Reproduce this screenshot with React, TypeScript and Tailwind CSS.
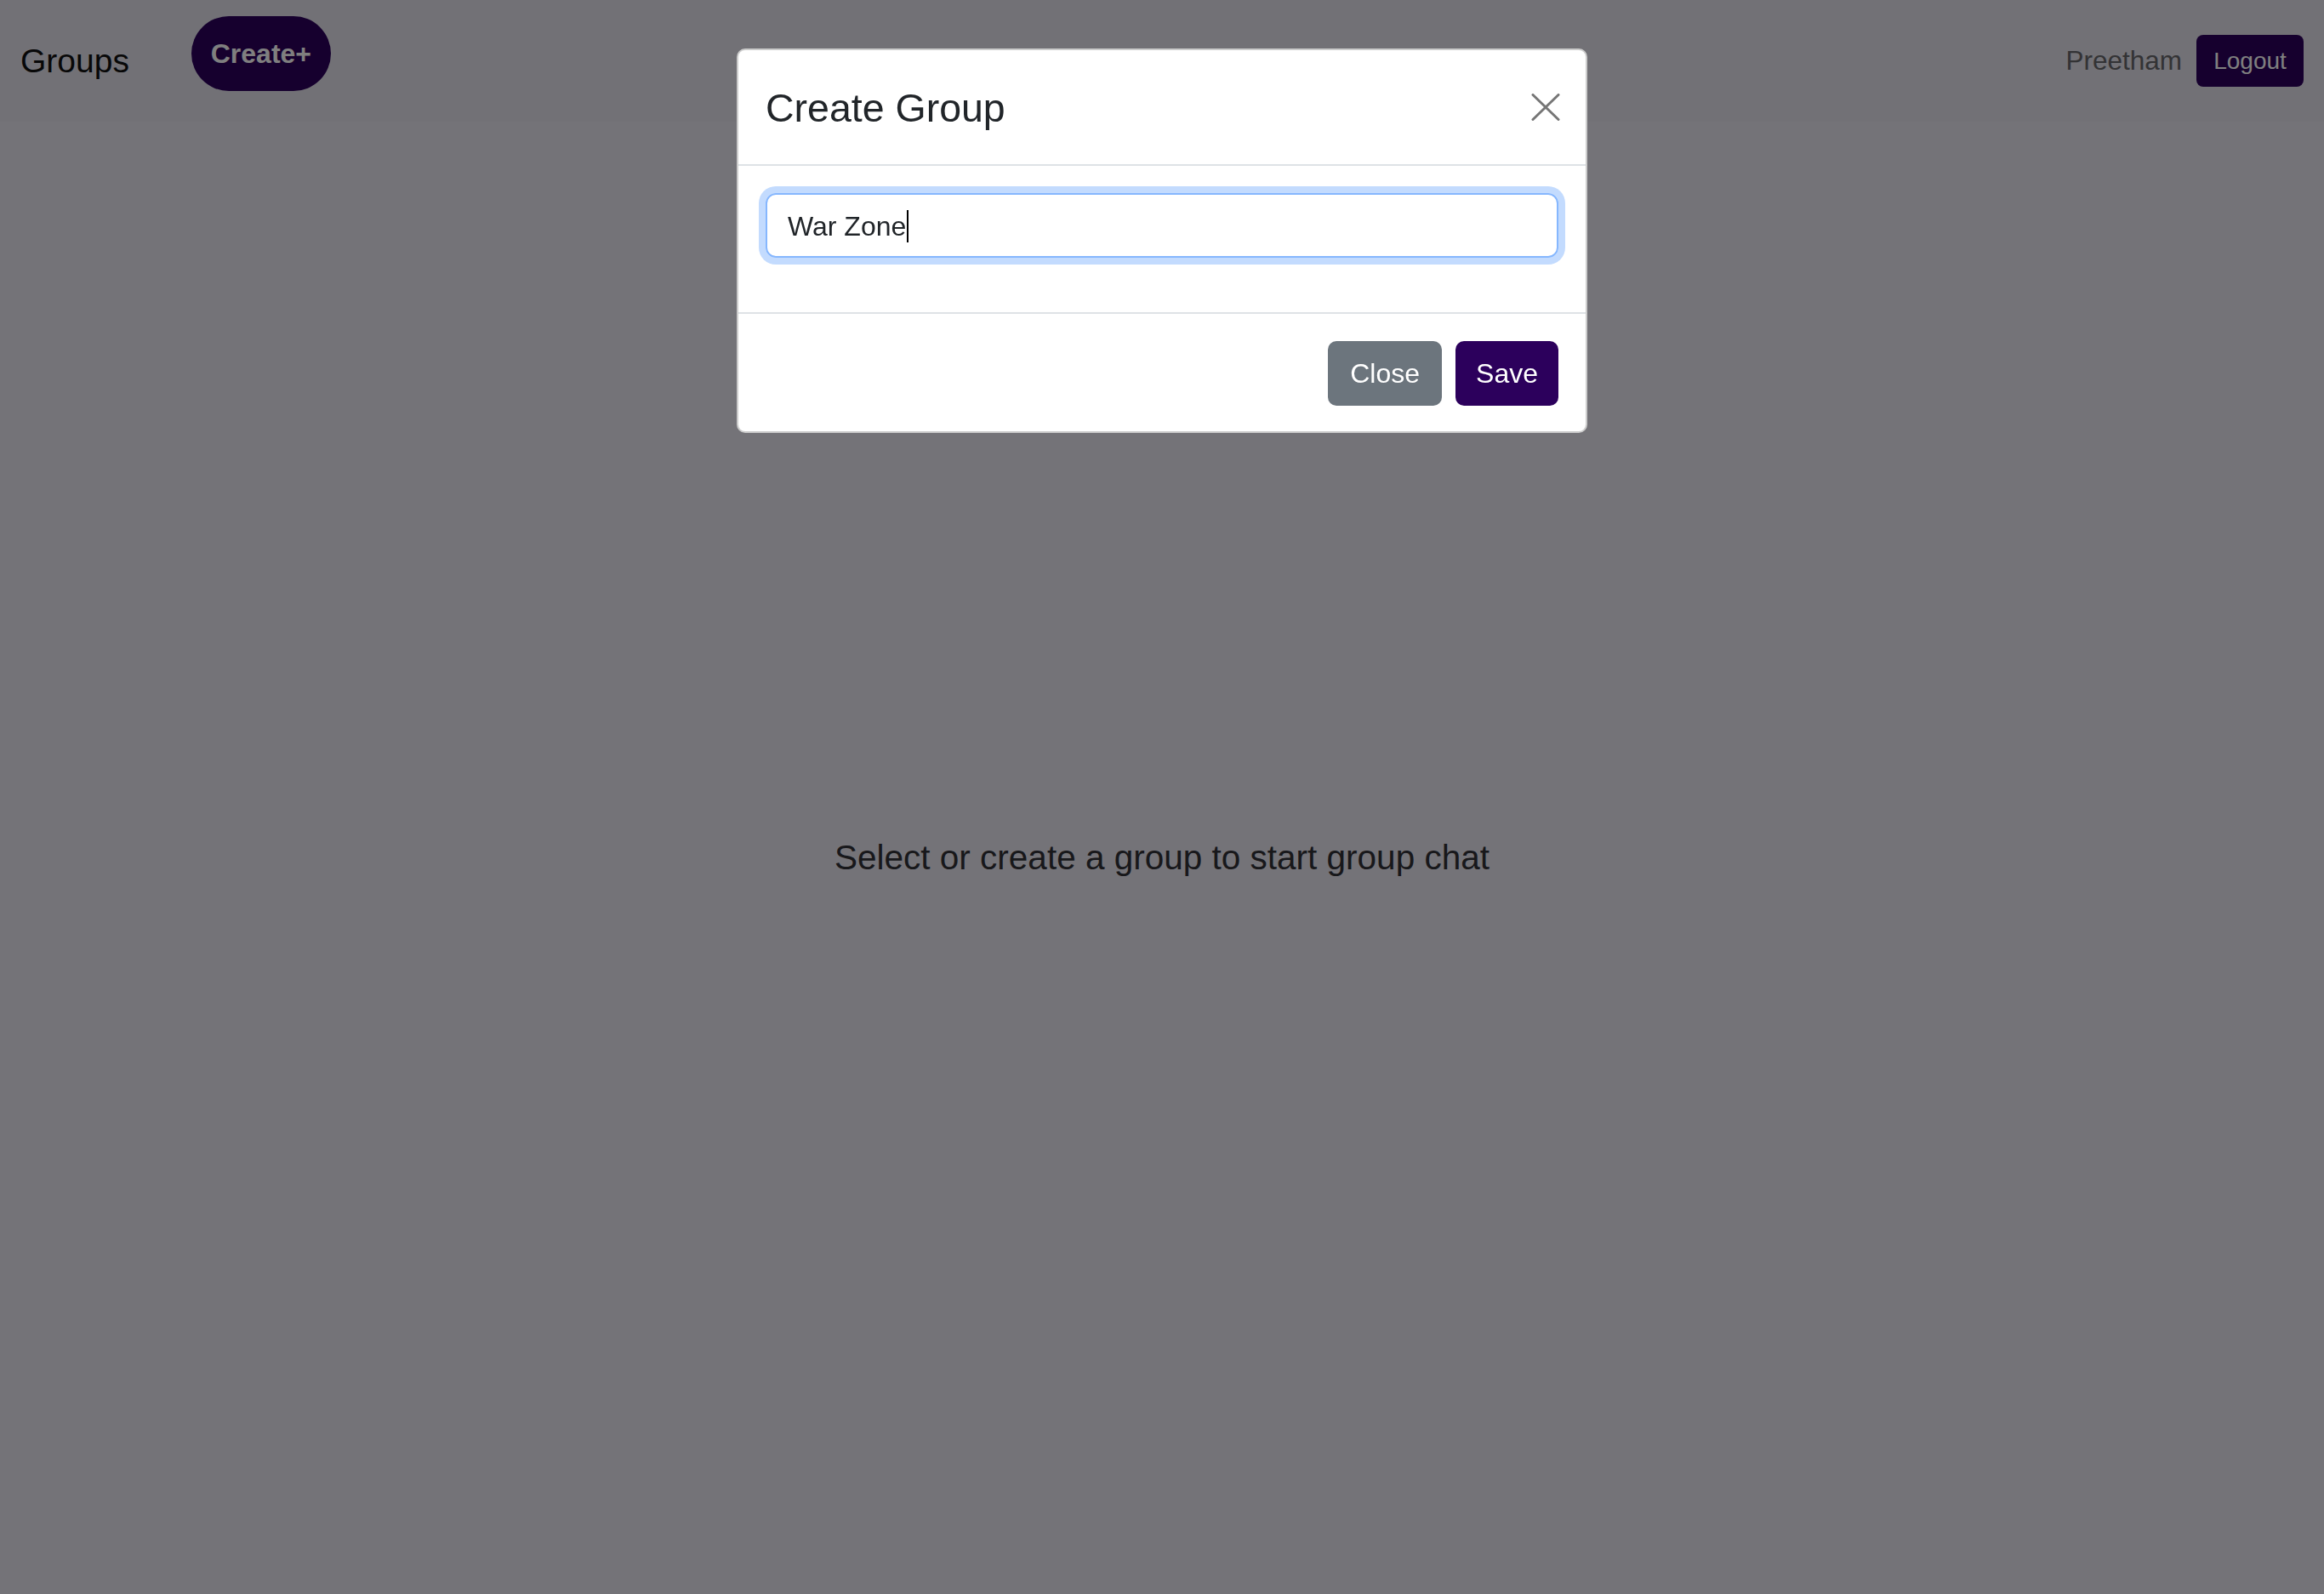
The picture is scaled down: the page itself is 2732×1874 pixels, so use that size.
// Page behind the modal backdrop
function TopBar() {
    return (
        <header className="flex h-[143px] items-center justify-between bg-[#e4e2ec] px-[24px]">
            <div className="flex items-center">
                <span className="text-[39px] leading-none text-[#111]">Groups</span>
                <button className="mb-[17px] ml-[73px] flex h-[88px] w-[164px] items-center justify-center rounded-full bg-[#2c005c] text-[32px] font-bold text-white">
                    Create+
                </button>
            </div>
            <div className="flex items-center gap-[17px]">
                <span className="text-[31.5px] text-[#67666a]">Preetham</span>
                <button className="flex h-[61px] w-[126px] items-center justify-center rounded-[8px] bg-[#2c005c] text-[28px] text-white">
                    Logout
                </button>
            </div>
        </header>
    );
}

function CreateGroupModal() {
    return (
        <div className="fixed inset-0 bg-black/50">
            <div className="mx-auto mt-[57px] w-[1000px] rounded-[10px] border-2 border-black/20 bg-white">
                {/* Header */}
                <div className="flex h-[136px] items-center justify-between border-b-2 border-[#dee2e6] pl-[32px] pr-[30px]">
                    <h5 className="mt-[3px] text-[46.5px] leading-none text-[#212529]">Create Group</h5>
                    <svg className="h-[32px] w-[34px]" viewBox="0 0 34 32" fill="none" stroke="#767676" strokeWidth="3" strokeLinecap="round">
                        <path d="M2 1.5L32 30.5M32 1.5L2 30.5" />
                    </svg>
                </div>
                {/* Body */}
                <div className="px-[32px] pb-[64px] pt-[32px]">
                    <div className="flex h-[76px] items-center rounded-[12px] border-2 border-[#86b7fe] px-[24px] pt-[2px] shadow-[0_0_0_8px_#c3dbfe]">
                        <span className="text-[32px] text-[#212529]">War Zone</span>
                        <span className="ml-[1px] h-[38px] w-[2px] bg-black" />
                    </div>
                </div>
                {/* Footer */}
                <div className="flex justify-end gap-[16px] border-t-2 border-[#dee2e6] px-[32px] pb-[30px] pt-[32px]">
                    <button className="flex h-[76px] items-center rounded-[10px] bg-[#6c757d] px-[26px] text-[32px] text-white">Close</button>
                    <button className="flex h-[76px] items-center rounded-[10px] bg-[#2c005c] px-[24px] text-[32px] text-white">Save</button>
                </div>
            </div>
        </div>
    );
}

export default function App() {
    return (
        <div className="relative flex min-h-screen flex-col bg-[#e8e6f0] font-['Liberation_Sans',Arial,sans-serif]">
            <TopBar />
            <main className="flex flex-1 items-center justify-center">
                <h5 className="text-[40.5px] text-[#313036]">Select or create a group to start group chat</h5>
            </main>
            <CreateGroupModal />
        </div>
    );
}
